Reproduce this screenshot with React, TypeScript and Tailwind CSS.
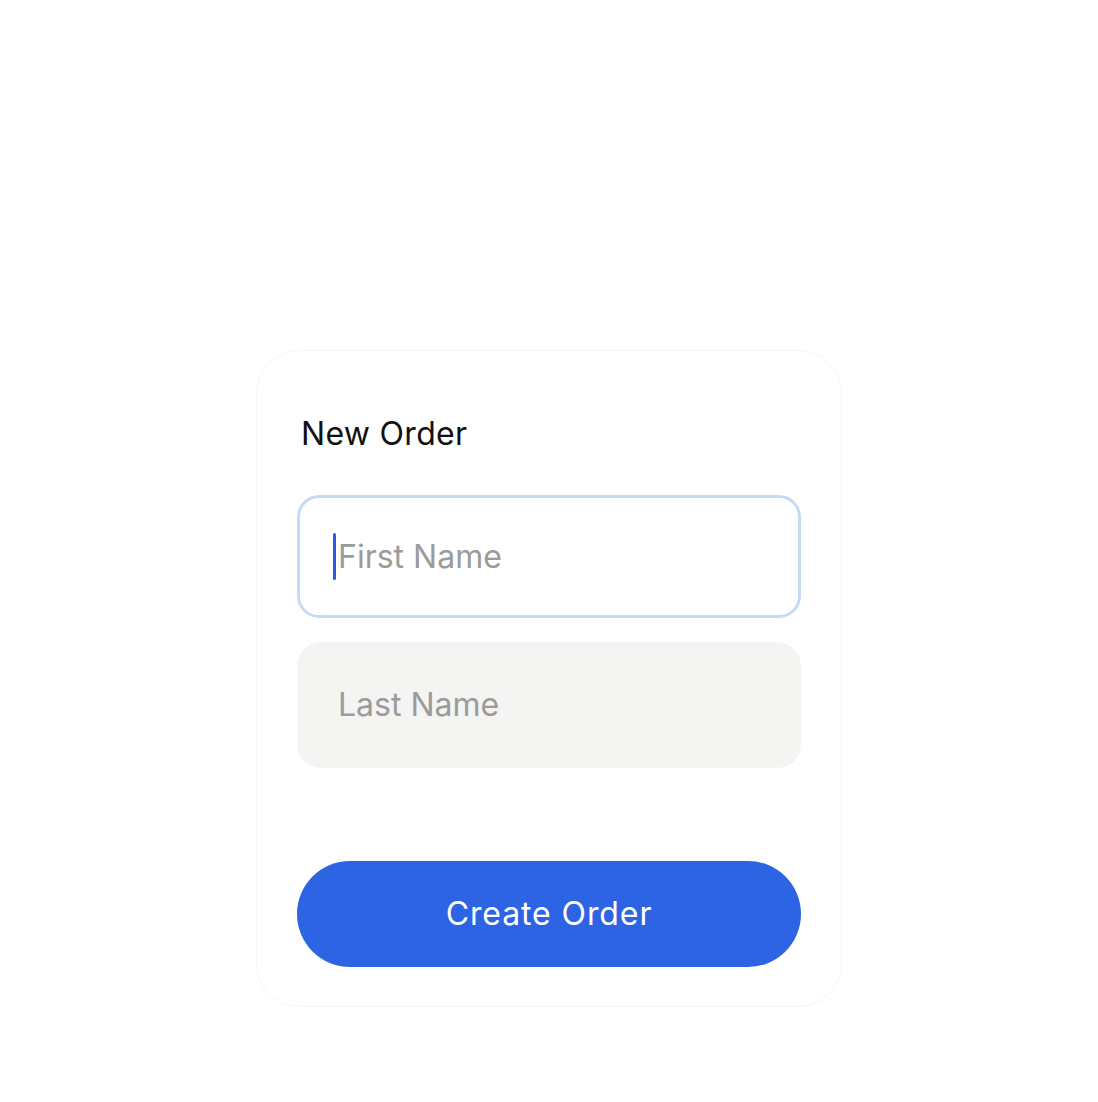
export default function App() {
  return (
    <div
      className="flex min-h-[1102px] w-full justify-center bg-white pt-[350px]"
      style={{ fontFamily: "Inter, 'Noto Sans', sans-serif" }}
    >
      <div className="flex h-[657px] w-[586px] flex-col rounded-[44px] border border-[#f6f6f6] bg-white px-[40px] pb-[39px] pt-[63px]">
        <h1 className="pl-[4px] text-[32px] leading-[40px] font-normal tracking-[0.3px] text-[#111]">New Order</h1>

        <div className="mt-[41px] flex h-[123px] items-center rounded-[22px] border-[3px] border-[#c6daf7] bg-white pl-[33px]">
          <span className="h-[47px] w-[3px] rounded-full bg-[#2a5be0]" />
          <span className="ml-[2px] text-[32px] text-[#9b9b9b]">First Name</span>
        </div>

        <div className="mt-[24px] flex h-[126px] items-center rounded-[24px] bg-[#f4f4f3] pl-[41px]">
          <span className="text-[32px] text-[#9b9b9b]">Last Name</span>
        </div>

        <button
          type="button"
          className="mt-auto flex h-[106px] w-full items-center justify-center rounded-full bg-[#2c64e3] text-[32px] tracking-[0.9px] text-white"
        >
          Create Order
        </button>
      </div>
    </div>
  );
}
